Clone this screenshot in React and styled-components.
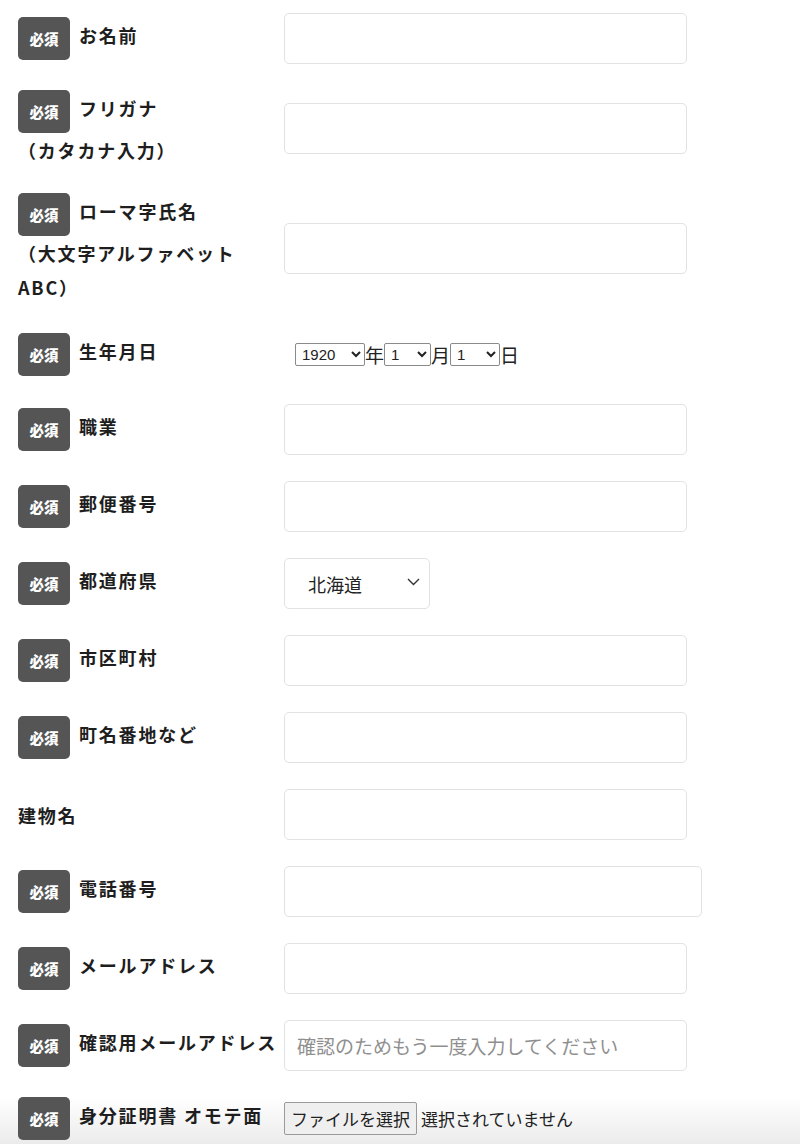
import React from "react";
import styled, { createGlobalStyle } from "styled-components";

const GlobalStyle = createGlobalStyle`
  html, body {
    margin: 0;
    padding: 0;
  }
  body {
    font-family: "Noto Sans CJK JP", "Noto Sans", sans-serif;
    color: #1e1e1e;
  }
`;

const Page = styled.div`
  min-height: 1144px;
  padding-left: 18px;
  box-sizing: border-box;
  background: linear-gradient(to bottom, #fff 1098px, #ebebeb 1144px);
`;

const Row = styled.div`
  display: grid;
  grid-template-columns: 266px 1fr;
  align-items: center;
  padding: 13px 0;
`;

const Label = styled.div`
  font-size: 18px;
  font-weight: 700;
  line-height: 34px;
  letter-spacing: 0.1em;
  color: #1e1e1e;
`;

const Badge = styled.span`
  display: inline-block;
  width: 52px;
  height: 43px;
  line-height: 43px;
  margin-right: 9px;
  border-radius: 5px;
  background: #555;
  color: #fff;
  font-size: 14.5px;
  font-weight: 900;
  letter-spacing: 0;
  text-align: center;
  vertical-align: middle;
`;

const Field = styled.div`
  display: flex;
  align-items: center;
  min-height: ${(p) => p.minHeight || 0}px;
  padding-left: ${(p) => p.indent || 0}px;
`;

const TextInput = styled.input`
  width: ${(p) => p.width || 403}px;
  height: 51px;
  box-sizing: border-box;
  border: 1px solid #e2e2e2;
  border-radius: 5px;
  background: #fff;
  padding: 0 12px;
  font-family: "Noto Sans CJK JP", sans-serif;
  font-size: 19px;
  color: #222;
  &::placeholder {
    color: #8f8f8f;
  }
`;

const DateSelect = styled.select`
  width: ${(p) => p.width}px;
  height: 23px;
  font-family: "Liberation Sans", sans-serif;
  font-size: 15px;
  color: #222;
  border: 1px solid #8a8a8a;
  border-radius: 2px;
  background: #fff;
  padding: 0 2px;
`;

const DateUnit = styled.span`
  font-size: 19px;
  line-height: 23px;
  font-weight: 400;
  color: #222;
`;

const PrefWrap = styled.div`
  position: relative;
  width: 146px;
`;

const PrefSelect = styled.select`
  appearance: none;
  width: 146px;
  height: 51px;
  box-sizing: border-box;
  border: 1px solid #e2e2e2;
  border-radius: 5px;
  background: #fff;
  padding: 0 0 0 23px;
  font-family: "Noto Sans CJK JP", sans-serif;
  font-size: 18px;
  color: #222;
`;

const Chevron = styled.svg`
  position: absolute;
  right: 10px;
  top: 20px;
  pointer-events: none;
`;

const FileButton = styled.button`
  height: 33px;
  padding: 0 6px;
  border: 1px solid #9a9a9a;
  border-radius: 2px;
  background: #efefef;
  font-family: "Noto Sans CJK JP", sans-serif;
  font-size: 17px;
  color: #222;
`;

const FileStatus = styled.span`
  margin-left: 4px;
  font-size: 17px;
  color: #222;
`;

const range = (from, to) => Array.from({ length: to - from + 1 }, (_, i) => from + i);

const fields = [
  { label: "お名前", required: true },
  { label: "フリガナ", sub: "（カタカナ入力）", required: true },
  { label: "ローマ字氏名", sub: "（大文字アルファベットABC）", required: true },
  { label: "生年月日", required: true, type: "date" },
  { label: "職業", required: true },
  { label: "郵便番号", required: true },
  { label: "都道府県", required: true, type: "pref" },
  { label: "市区町村", required: true },
  { label: "町名番地など", required: true },
  { label: "建物名" },
  { label: "電話番号", required: true, width: 418 },
  { label: "メールアドレス", required: true },
  {
    label: "確認用メールアドレス",
    required: true,
    placeholder: "確認のためもう一度入力してください",
  },
  { label: "身分証明書 オモテ面", required: true, type: "file" },
];

const renderField = (f) => {
  if (f.type === "date") {
    return (
      <Field minHeight={48} indent={11}>
        <DateSelect width={70} defaultValue="1920">
          {range(1920, 2010).map((y) => (
            <option key={y}>{y}</option>
          ))}
        </DateSelect>
        <DateUnit>年</DateUnit>
        <DateSelect width={47}>
          {range(1, 12).map((m) => (
            <option key={m}>{m}</option>
          ))}
        </DateSelect>
        <DateUnit>月</DateUnit>
        <DateSelect width={50}>
          {range(1, 31).map((d) => (
            <option key={d}>{d}</option>
          ))}
        </DateSelect>
        <DateUnit>日</DateUnit>
      </Field>
    );
  }
  if (f.type === "pref") {
    return (
      <Field>
        <PrefWrap>
          <PrefSelect>
            <option>北海道</option>
            <option>青森県</option>
            <option>岩手県</option>
          </PrefSelect>
          <Chevron width="13" height="8" viewBox="0 0 13 8">
            <path d="M1 1l5.5 5.5L12 1" fill="none" stroke="#333" strokeWidth="1.4" />
          </Chevron>
        </PrefWrap>
      </Field>
    );
  }
  if (f.type === "file") {
    return (
      <Field>
        <FileButton type="button">ファイルを選択</FileButton>
        <FileStatus>選択されていません</FileStatus>
      </Field>
    );
  }
  return (
    <Field>
      <TextInput type="text" width={f.width} placeholder={f.placeholder || ""} />
    </Field>
  );
};

const App = () => {
  return (
    <Page>
      <GlobalStyle />
      {fields.map((f) => (
        <Row key={f.label}>
          <Label>
            {f.required && <Badge>必須</Badge>}
            {f.label}
            {f.sub && (
              <>
                <br />
                {f.sub}
              </>
            )}
          </Label>
          {renderField(f)}
        </Row>
      ))}
    </Page>
  );
};

export default App;
